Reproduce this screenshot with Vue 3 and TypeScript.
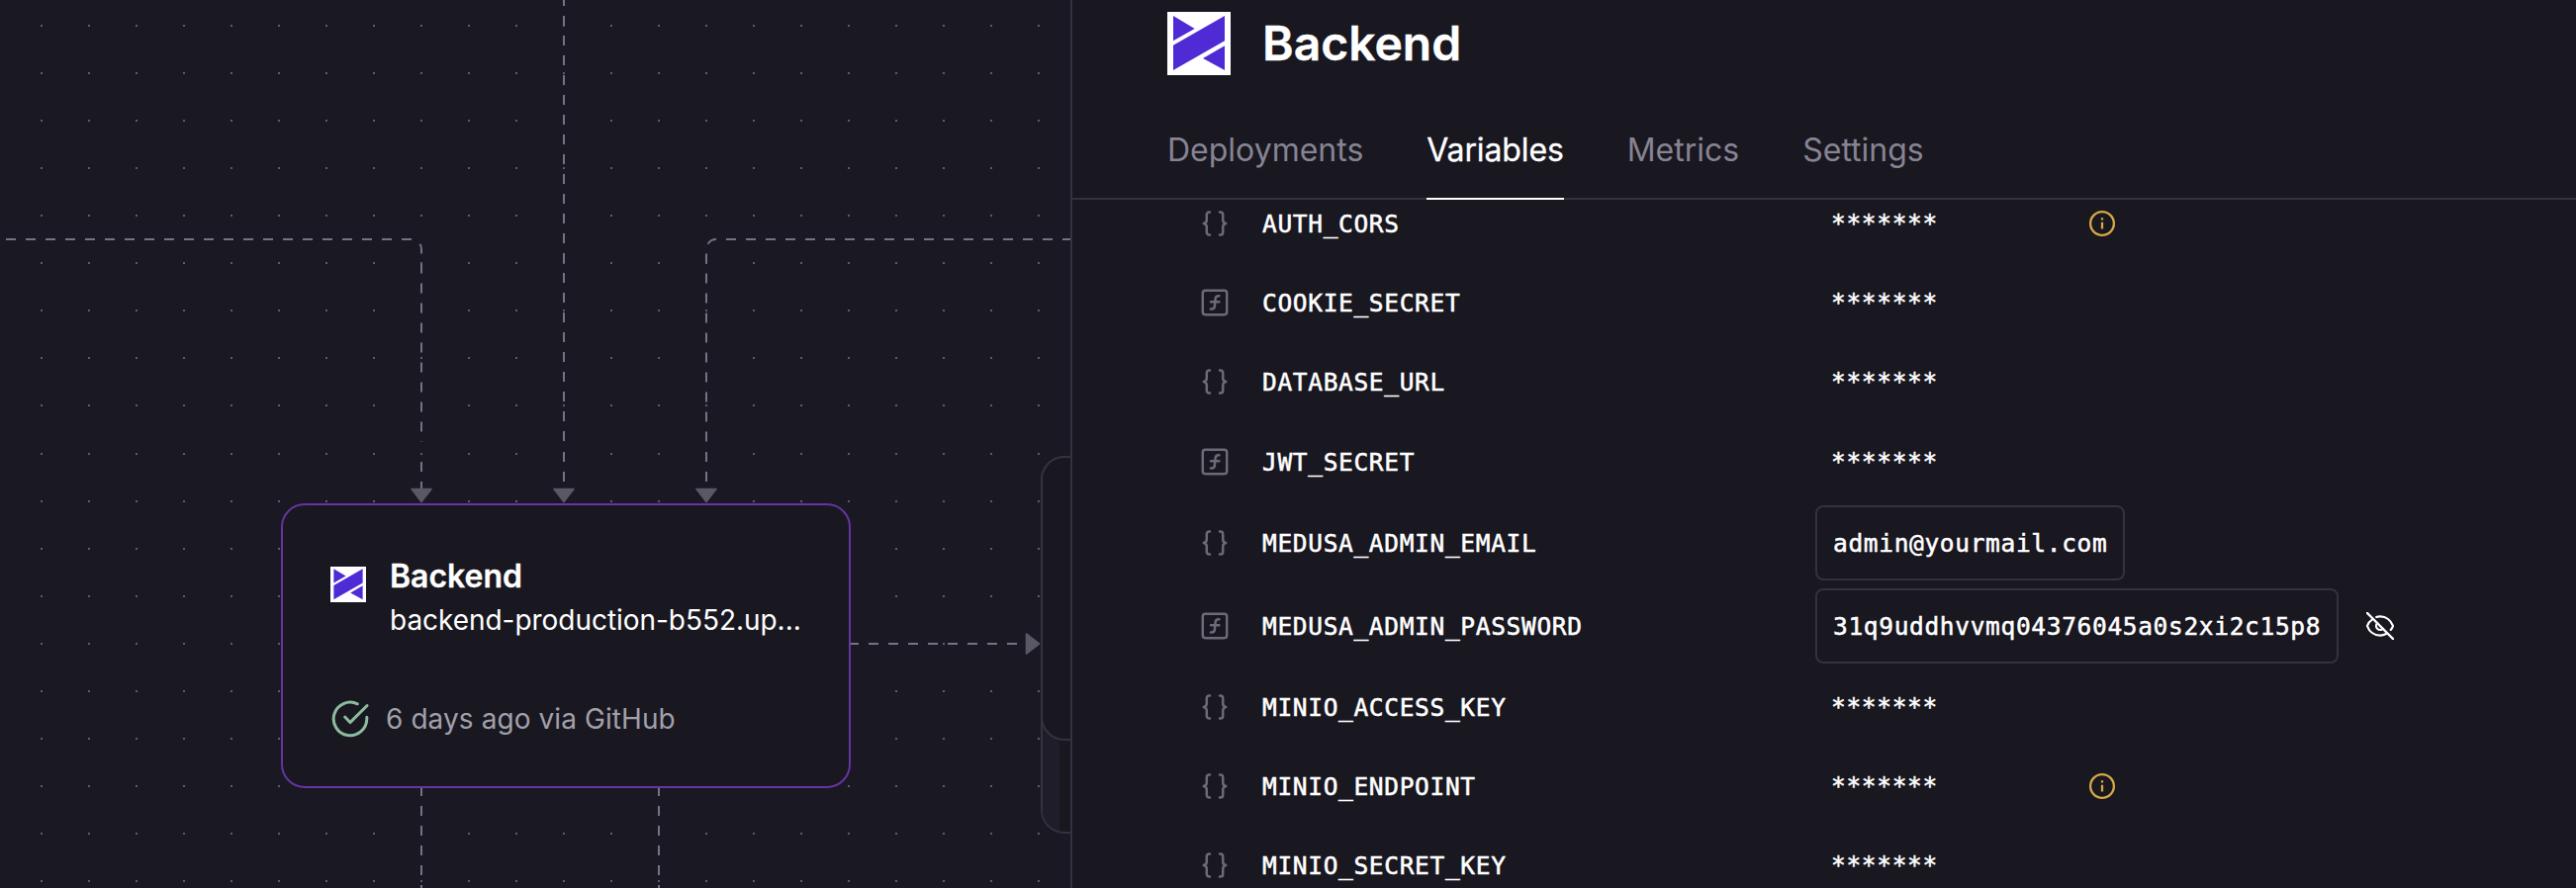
<script setup lang="ts">
interface Variable {
  name: string
  kind: 'reference' | 'function'
  value?: string
  revealed?: boolean
  info?: boolean
  size?: 'tall' | 'nudged'
}

const tabs: string[] = ['Deployments', 'Variables', 'Metrics', 'Settings']
const activeTab = 'Variables'

const variables: Variable[] = [
  { name: 'AUTH_CORS', kind: 'reference', info: true },
  { name: 'COOKIE_SECRET', kind: 'function' },
  { name: 'DATABASE_URL', kind: 'reference' },
  { name: 'JWT_SECRET', kind: 'function', size: 'nudged' },
  { name: 'MEDUSA_ADMIN_EMAIL', kind: 'reference', value: 'admin@yourmail.com', size: 'tall' },
  { name: 'MEDUSA_ADMIN_PASSWORD', kind: 'function', value: '31q9uddhvvmq04376045a0s2xi2c15p8', revealed: true, size: 'tall' },
  { name: 'MINIO_ACCESS_KEY', kind: 'reference' },
  { name: 'MINIO_ENDPOINT', kind: 'reference', info: true },
  { name: 'MINIO_SECRET_KEY', kind: 'reference' },
]

const gridStep = 48
const dotColumns: number[] = Array.from({ length: 22 }, (_, i) => 42 + i * gridStep)
const dotRows: number[] = Array.from({ length: 19 }, (_, i) => 26 + i * gridStep + (i > 8 ? 1 : 0))

const edges: string[] = [
  'M6 242H416A10 10 0 0 1 426 252V447',
  'M426 467V507',
  'M570 -4V447',
  'M570 457V490',
  'M1084 242H724A10 10 0 0 0 714 252V447',
  'M714 457V490',
  'M426 795V898',
  'M666 795V898',
  'M858 651H1034',
]

const arrowTransforms: string[] = [
  'translate(426 501)',
  'translate(570 501)',
  'translate(714 501)',
  'translate(1044 651) rotate(-90)',
]
</script>

<template>
  <main class="app">
    <section class="canvas">
      <svg class="wires" width="1082" height="898" viewBox="0 0 1082 898">
        <g class="dots">
          <template v-for="y in dotRows" :key="y">
            <rect v-for="x in dotColumns" :key="x" :x="x - 1" :y="y - 1" width="2" height="2" />
          </template>
        </g>
        <path v-for="d in edges" :key="d" class="edge" :d="d" />
        <path v-for="t in arrowTransforms" :key="t" class="arrow" :transform="t" d="M-10 -6.5H10L0 6.5Z" />
      </svg>

      <div class="stack-back"><div class="stack-volume"></div></div>
      <div class="stack-front"></div>

      <article class="service">
        <div class="service-head">
          <svg class="service-logo" width="36" height="36" viewBox="0 0 64 64">
            <rect width="64" height="64" fill="#fff" />
            <path fill="#4f2bd6" d="M6 4L27.7 17L6 29.3ZM58 4V29.3L6 59V33.7ZM58 34.3V59L36 47Z" />
          </svg>
          <div class="service-text">
            <h2 class="service-name">Backend</h2>
            <p class="service-url">backend-production-b552.up...</p>
          </div>
        </div>
        <div class="service-status">
          <svg width="40" height="40" viewBox="0 0 40 40" fill="none" stroke="#8cbb9f" stroke-width="3" stroke-linecap="round" stroke-linejoin="round">
            <path d="M36.8 18.2V20A16.8 16.8 0 1 1 27.3 4.8" />
            <path d="M14.7 18L19.9 23.6L37.1 6.5" />
          </svg>
          <span>6 days ago via GitHub</span>
        </div>
      </article>
    </section>

    <section class="panel">
      <header class="panel-head">
        <div class="panel-title">
          <svg width="64" height="64" viewBox="0 0 64 64">
            <rect width="64" height="64" fill="#fff" />
            <path fill="#4f2bd6" d="M6 4L27.7 17L6 29.3ZM58 4V29.3L6 59V33.7ZM58 34.3V59L36 47Z" />
          </svg>
          <h1>Backend</h1>
        </div>
        <nav class="tabs">
          <a v-for="tab in tabs" :key="tab" class="tab" :class="{ active: tab === activeTab }">{{ tab }}</a>
        </nav>
      </header>

      <div class="scroll">
        <ul class="variables">
          <li v-for="v in variables" :key="v.name" class="row" :class="v.size">
            <svg v-if="v.kind === 'reference'" class="kind" width="28" height="28" viewBox="0 0 28 28">
              <path d="M9 2.4H8.4A2.6 2.6 0 0 0 5.8 5V10.4C5.8 12.4 4.6 13.6 2.8 14C4.6 14.4 5.8 15.6 5.8 17.6V23A2.6 2.6 0 0 0 8.4 25.6H9" />
              <path d="M19 2.4H19.6A2.6 2.6 0 0 1 22.2 5V10.4C22.2 12.4 23.4 13.6 25.2 14C23.4 14.4 22.2 15.6 22.2 17.6V23A2.6 2.6 0 0 1 19.6 25.6H19" />
            </svg>
            <svg v-else class="kind" width="28" height="28" viewBox="0 0 28 28">
              <rect x="1.8" y="1.8" width="24.4" height="24.4" rx="2.6" />
              <path d="M18.4 7.3H17.8C15.8 7.3 14.8 8.4 14.6 10.2L13.9 17.4C13.7 19.6 12.8 20.6 11 20.6H9.9M10 13.3H18.4" />
            </svg>
            <span class="name">{{ v.name }}</span>
            <div class="value-cell">
              <span v-if="v.value" class="value boxed">{{ v.value }}</span>
              <span v-else class="value masked">*******</span>
            </div>
            <svg v-if="v.info" class="info" width="28" height="28" viewBox="0 0 28 28">
              <circle cx="14" cy="14" r="11.9" />
              <path d="M14 8.2V10.4M14 12.8V19.6" />
            </svg>
            <svg v-if="v.revealed" class="eye" width="28" height="28" viewBox="0 0 28 28">
              <path d="M0.9 0.9L27.1 27.1" />
              <path d="M10.2 5C11.4 4.6 12.7 4.4 14 4.4C20 4.4 25 8.4 27 14C26.5 15.5 25.7 16.8 24.7 17.9" />
              <path d="M6.2 7.4C3.7 9 1.9 11.3 1 14C3 19.7 8 23.6 14 23.6C16.3 23.6 18.3 23 20.1 22.1" />
              <path d="M11.2 11A4 4 0 0 0 17 16.8" />
            </svg>
          </li>
        </ul>
      </div>
    </section>
  </main>
</template>

<style>
body {
  margin: 0;
  background: #191720;
}
</style>

<style scoped>
* {
  box-sizing: border-box;
}
.app {
  display: flex;
  width: 2604px;
  height: 898px;
  overflow: hidden;
  background: #191720;
  color: #fff;
  font-family: Inter, 'Liberation Sans', sans-serif;
}
h1, h2, p, ul {
  margin: 0;
  padding: 0;
}
svg {
  display: block;
  flex: none;
}

.canvas {
  position: relative;
  flex: none;
  width: 1082px;
  overflow: hidden;
  background: #1a1822;
}
.wires {
  position: absolute;
  inset: 0;
}
.dots {
  fill: #5e5c6a;
}
.edge {
  fill: none;
  stroke: #757381;
  stroke-width: 2;
  stroke-dasharray: 10 10;
}
.arrow {
  fill: #5a5864;
  stroke: #5a5864;
  stroke-width: 1.6;
  stroke-linejoin: round;
}
.stack-front,
.stack-back {
  position: absolute;
  left: 1052px;
  top: 461px;
  width: 576px;
  border: 2px solid #33323e;
  border-radius: 24px;
}
.stack-front {
  height: 288px;
  background: #191720;
}
.stack-back {
  height: 382px;
  overflow: hidden;
  background: #191720;
}
.stack-volume {
  width: 17px;
  height: 100%;
  background: #1f1d29;
}

.service {
  position: absolute;
  left: 284px;
  top: 509px;
  width: 576px;
  height: 288px;
  padding: 51px 48px 0;
  border: 2px solid #6435a3;
  border-radius: 24px;
  background: #191720;
}
.service-head {
  display: flex;
  gap: 24px;
}
.service-logo {
  margin-top: 11px;
}
.service-name {
  padding-top: 1px;
  font-size: 32px;
  line-height: 40px;
  font-weight: 600;
  -webkit-text-stroke: 0.3px currentColor;
}
.service-url {
  margin-top: 2px;
  font-size: 28px;
  line-height: 44px;
  letter-spacing: -0.04px;
  white-space: nowrap;
}
.service-status {
  display: flex;
  align-items: center;
  gap: 16px;
  margin-top: 58px;
  height: 40px;
  font-size: 28px;
  letter-spacing: 0.08px;
  color: #a1a0ab;
}

.panel {
  display: flex;
  flex: 1;
  flex-direction: column;
  border-left: 2px solid #33323e;
}
.panel-head {
  display: flex;
  flex-direction: column;
  height: 202px;
  padding: 12px 96px 0;
  border-bottom: 2px solid #33323e;
}
.panel-title {
  display: flex;
  align-items: center;
  gap: 32px;
}
.panel-title h1 {
  font-size: 48px;
  line-height: 64px;
  font-weight: 600;
  -webkit-text-stroke: 0.4px currentColor;
}
.tabs {
  display: flex;
  gap: 64px;
  height: 126px;
  margin-top: auto;
  margin-bottom: -2px;
}
.tab {
  padding-top: 51px;
  font-size: 32px;
  line-height: 50px;
  color: #868492;
}
.tab.active {
  color: #fff;
  letter-spacing: -0.13px;
  border-bottom: 2px solid #fff;
  -webkit-text-stroke: 0.3px currentColor;
}

.scroll {
  flex: 1;
  overflow: hidden;
}
.variables {
  margin-top: -16px;
  padding-left: 130px;
  list-style: none;
}
.row {
  display: flex;
  align-items: center;
  height: 80px;
}
.row.nudged {
  height: 81px;
  padding-top: 1px;
}
.row.tall {
  height: 84px;
}
.kind {
  fill: none;
  stroke: #6c6a78;
  stroke-width: 2.5;
  stroke-linecap: round;
  stroke-linejoin: round;
}
.name,
.value {
  font-family: 'DejaVu Sans Mono', 'Liberation Mono', monospace;
  font-size: 24.5px;
  line-height: 32px;
  letter-spacing: 0.66px;
  white-space: nowrap;
  -webkit-text-stroke: 0.5px currentColor;
}
.name {
  width: 559px;
  margin-left: 34px;
  padding-top: 2px;
}
.value {
  display: block;
}
.masked {
  width: 276px;
  padding-left: 16px;
}
.boxed {
  height: 76px;
  padding: 21px 15.6px 19px 16px;
  border: 2px solid #33323e;
  border-radius: 8px;
}
.info {
  fill: none;
  stroke: #d4a844;
  stroke-width: 2.3;
}
.eye {
  margin-left: 28px;
  fill: none;
  stroke: #fff;
  stroke-width: 2.2;
  stroke-linecap: round;
}
</style>
